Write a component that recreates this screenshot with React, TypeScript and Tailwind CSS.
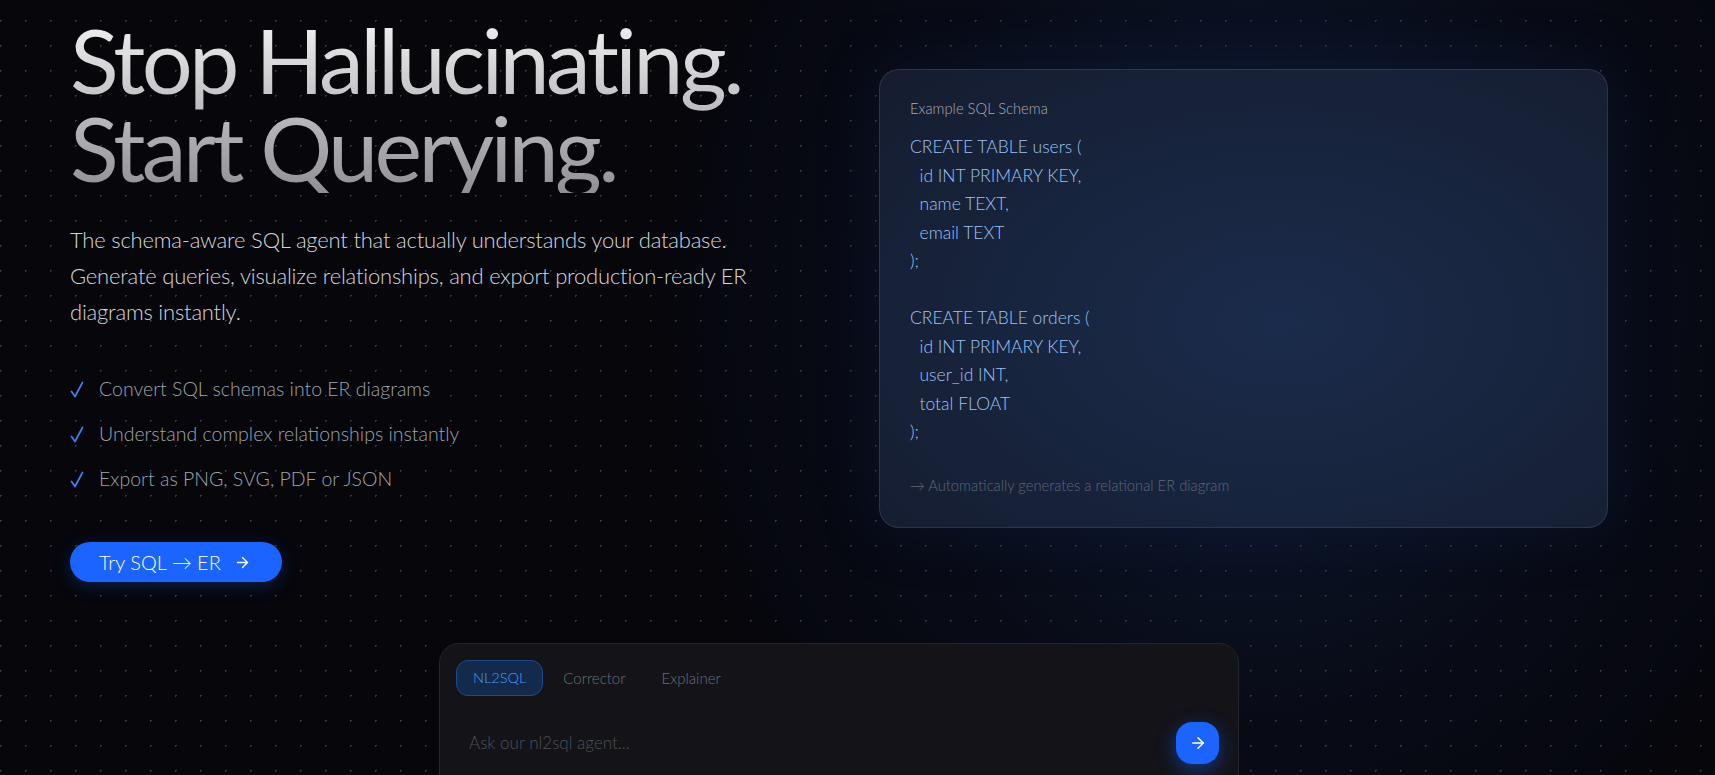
import { ArrowRight } from "lucide-react";

const code = `CREATE TABLE users (
  id INT PRIMARY KEY,
  name TEXT,
  email TEXT
);

CREATE TABLE orders (
  id INT PRIMARY KEY,
  user_id INT,
  total FLOAT
);`;

const bullets = [
  "Convert SQL schemas into ER diagrams",
  "Understand complex relationships instantly",
  "Export as PNG, SVG, PDF or JSON",
];

function Check() {
  return (
    <svg width="14" height="17" viewBox="0 0 14 17" fill="none" className="shrink-0">
      <path d="M1.5 10.5 L5 15.5 L12.5 1.5" stroke="#3b82f6" strokeWidth="1.7" strokeLinecap="round" strokeLinejoin="round" />
    </svg>
  );
}

export default function App() {
  return (
    <div className="relative h-[775px] overflow-hidden bg-[#06060b] font-['Lato',sans-serif] font-light">
      <div className="absolute left-[640px] top-[-380px] h-[1360px] w-[1220px] bg-[radial-gradient(closest-side,rgba(24,44,88,0.55),rgba(12,22,46,0.35)_60%,transparent)]" />
      <div className="absolute inset-0 bg-[radial-gradient(circle,#363642_1px,transparent_1px)] bg-[size:25px_25px] bg-[position:-12px_8px]" />

      <div className="relative ml-[70px] w-[1538px] pt-[15px]">
        <div className="grid grid-cols-2 items-center gap-x-20">
          <div>
            <h1 className="whitespace-nowrap bg-gradient-to-b from-[#f4f4f6] to-[#8f8f94] bg-clip-text pb-[2px] text-[90px] font-normal leading-[88px] tracking-[-0.04em] text-transparent">
              Stop Hallucinating.
              <br />
              Start Querying.
            </h1>
            <p className="mt-[29px] whitespace-nowrap text-[22px] leading-[36px] tracking-[-0.2px] text-[#d4d6db]">
              The schema-aware SQL agent that actually understands your database.
              <br />
              Generate queries, visualize relationships, and export production-ready ER
              <br />
              diagrams instantly.
            </p>
            <ul className="mt-[45px] flex flex-col gap-[17px]">
              {bullets.map((b) => (
                <li key={b} className="flex items-center text-[19.5px] leading-[28px] text-[#9ea4ae]">
                  <span className="flex w-[29px] items-center">
                    <Check />
                  </span>
                  <span>{b}</span>
                </li>
              ))}
            </ul>
            <button className="mt-[49px] flex h-[40px] items-center gap-[13px] rounded-full bg-[#1b64ff] pl-[29px] pr-[31px] text-[20px] text-white shadow-[0_4px_18px_rgba(27,100,255,0.25)]">
              <span>Try SQL → ER</span>
              <ArrowRight size={17} strokeWidth={2} />
            </button>
          </div>

          <div className="rounded-[20px] border border-white/10 bg-[radial-gradient(ellipse_at_55%_55%,#1b2b4b_0%,#18253f_45%,#151c2e_100%)] px-[30px] pb-[32px] pt-[28px] shadow-[0_0_60px_rgba(20,40,90,0.25)]">
            <div className="text-[14.75px] leading-[20px] text-[#a6abb5]">Example SQL Schema</div>
            <pre className="mt-[15px] whitespace-pre font-['Lato',sans-serif] text-[17.5px] font-light leading-[28.5px] text-[#9cc2f6]">
              {code}
            </pre>
            <div className="mt-[28px] text-[14.75px] leading-[20px] text-[#5f6675]">
              → Automatically generates a relational ER diagram
            </div>
          </div>
        </div>

        <div className="mx-auto mt-[61px] h-[200px] w-[800px] rounded-[20px] border border-[#24242b] bg-[#131318] p-4">
          <div className="flex gap-1">
            <div className="flex h-[36px] items-center rounded-xl border border-[#1d4a8c] bg-[#132a4c] px-4 text-[14.5px] text-[#4f9cf9]">
              NL2SQL
            </div>
            <div className="flex h-[36px] items-center px-4 text-[15px] text-[#6b6f7a]">Corrector</div>
            <div className="flex h-[36px] items-center px-4 text-[15px] text-[#6b6f7a]">Explainer</div>
          </div>
          <div className="mt-[26px] flex items-center justify-between pl-[13px] pr-[3px]">
            <span className="text-[17px] text-[#4d515b]">Ask our nl2sql agent...</span>
            <button className="flex h-[42px] w-[43px] items-center justify-center rounded-2xl bg-[#1b64ff] text-white shadow-[0_6px_20px_rgba(27,100,255,0.45)]">
              <ArrowRight size={18} strokeWidth={2} />
            </button>
          </div>
        </div>
      </div>
    </div>
  );
}
